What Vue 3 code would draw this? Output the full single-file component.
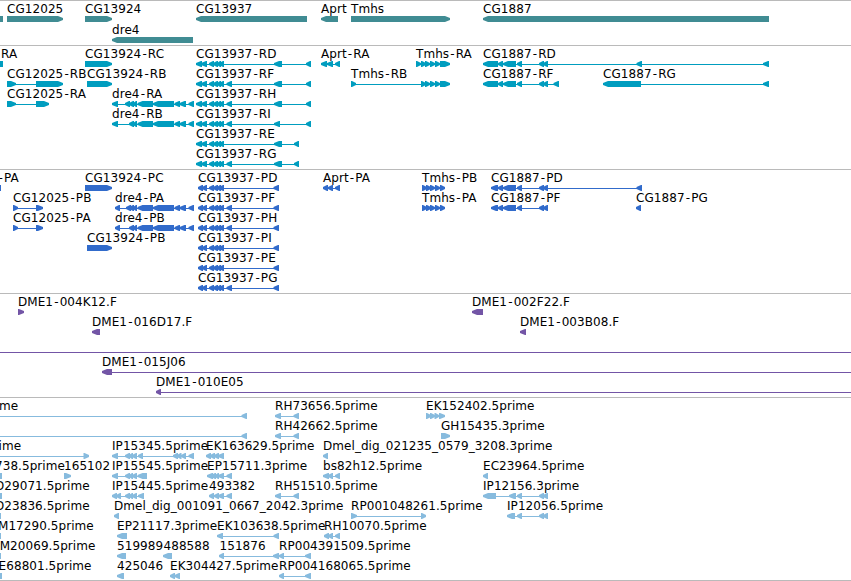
<script setup>
const HEAD = 5;

// feature: [row, label, start, exons, options]
const f = (row, label, x, exons, opts = {}) => ({ row, label, x, exons, ...opts });
const right = { dir: 1 };

const tail37 = [[209, 214], [213, 218], [217, 221], [219, 224]];
const rna37 = [[196, 202], [201, 207], ...tail37];
const pep37 = [[198, 203], [202, 207], ...tail37];
const extra37 = [226.5, 232];
const dre4 = [[129, 134], [133, 137], [137.5, 153], [153, 174], [174.5, 180], [179.5, 186], [188.5, 194]];
const tmhs = [[421, 426], [425, 430], [430, 435], [435, 440]];
const tmhsPep = [[422, 427], [426, 431], [430, 435], [435, 440], [440, 445]];
const cg1887 = [[498, 503], [503, 516], [517, 522], [539, 544], [543, 548]];
const ip = [[125, 130], [129, 133], [132, 137]];
const aprt = [[328, 333], [335, 340]];

const tracks = [
  {
    name: 'gene',
    height: 44,
    pitch: 21,
    features: [
      f(0, '', -8, [[-8, 3]]),
      f(0, 'CG12025', 7, [[7, 63]], right),
      f(0, 'CG13924', 85, [[85, 112]], right),
      f(0, 'CG13937', 196, [[196, 307]]),
      f(0, 'Aprt', 321, [[321, 338]]),
      f(0, 'Tmhs', 351, [[351, 450]], right),
      f(0, 'CG1887', 483, [[483, 769]]),
      f(1, 'dre4', 112, [[112, 193]]),
    ],
  },
  {
    name: 'transcript',
    height: 123,
    pitch: 20,
    features: [
      f(0, 'RA', 1, [[-8, 3]]),
      f(0, 'CG13924-RC', 85, [[85, 112]], right),
      f(0, 'CG13937-RD', 196, [...rna37, [274, 282], [306, 311]]),
      f(0, 'Aprt-RA', 321, [[321, 327], [327, 333], [335, 340]]),
      f(0, 'Tmhs-RA', 416, [[416, 421], ...tmhs, [440, 450]], right),
      f(0, 'CG1887-RD', 483, [[483, 498], ...cg1887, [636.5, 642], [763, 769]]),
      f(1, 'CG12025-RB', 7, [[7, 16], [36, 63]], right),
      f(1, 'CG13924-RB', 87, [[87, 112]], right),
      f(1, 'CG13937-RF', 196, [...rna37, extra37, [274, 282], [306, 311]]),
      f(1, 'Tmhs-RB', 351, [[351, 356], ...tmhs, [440, 450]], right),
      f(1, 'CG1887-RF', 483, [[483, 498], ...cg1887, [553.5, 559]]),
      f(1, 'CG1887-RG', 603, [[603, 641], [763, 769]]),
      f(2, 'CG12025-RA', 7, [[7, 16], [36, 49]], right),
      f(2, 'dre4-RA', 112, [[112, 118], [125, 130], ...dre4]),
      f(2, 'CG13937-RH', 196, [...rna37, extra37, [274, 282], [306, 311]]),
      f(3, 'dre4-RB', 112, [[112, 118], ...dre4]),
      f(3, 'CG13937-RI', 196, [...rna37, extra37, [274, 280], [306, 311]]),
      f(4, 'CG13937-RE', 196, [...rna37, [274, 282], [294, 299]]),
      f(5, 'CG13937-RG', 196, [...rna37, extra37, [274, 282], [294, 299]]),
    ],
  },
  {
    name: 'protein',
    height: 123,
    pitch: 20,
    features: [
      f(0, '-PA', -2.6, [[-8, 1]]),
      f(0, 'CG13924-PC', 85, [[85, 112]], right),
      f(0, 'CG13937-PD', 198, [...pep37, [273.5, 279]]),
      f(0, 'Aprt-PA', 323, [[323, 328], ...aprt]),
      f(0, 'Tmhs-PB', 422, tmhsPep, right),
      f(0, 'CG1887-PD', 491, [[491, 498], ...cg1887, [636.5, 642]]),
      f(1, 'CG12025-PB', 13, [[13, 18], [36, 43]], right),
      f(1, 'dre4-PA', 115, [[115, 120], [126, 131], ...dre4]),
      f(1, 'CG13937-PF', 198, [...pep37, extra37, [273.5, 279]]),
      f(1, 'Tmhs-PA', 422, tmhsPep, right),
      f(1, 'CG1887-PF', 491, [[491, 498], ...cg1887]),
      f(1, 'CG1887-PG', 636, [[636, 641]]),
      f(2, 'CG12025-PA', 13, [[13, 18], [36, 43]], right),
      f(2, 'dre4-PB', 115, [[115, 120], ...dre4]),
      f(2, 'CG13937-PH', 198, [...pep37, extra37, [273.5, 279]]),
      f(3, 'CG13924-PB', 87, [[87, 112]], right),
      f(3, 'CG13937-PI', 198, [...pep37, [273.5, 279]]),
      f(4, 'CG13937-PE', 198, [...pep37, [273.5, 279]]),
      f(5, 'CG13937-PG', 198, [...pep37, extra37, [273.5, 279]]),
    ],
  },
  {
    name: 'bac',
    height: 103,
    pitch: 20,
    features: [
      f(0, 'DME1-004K12.F', 18, [[18, 24]], right),
      f(0, 'DME1-002F22.F', 472, [[472, 483]]),
      f(1, 'DME1-016D17.F', 92, [[92, 100]]),
      f(1, 'DME1-003B08.F', 520, [[520, 526]]),
      f(2, '', 0, [], { from: 0, to: 851 }),
      f(3, 'DME1-015J06', 102, [[102, 112]], { to: 851 }),
      f(4, 'DME1-010E05', 156, [[156, 161]], { to: 851 }),
    ],
  },
  {
    name: 'est',
    height: 182,
    pitch: 20,
    features: [
      f(0, 'me', -1, [[241.5, 247]], { from: 0 }),
      f(0, 'RH73656.5prime', 275, [[275, 281], [293.5, 299]]),
      f(0, 'EK152402.5prime', 426, [[426, 431], [430, 435], [434.5, 439], [439, 445]], right),
      f(1, '', 0, [[241.5, 247]], { from: 0 }),
      f(1, 'RH42662.5prime', 275, [[275, 281], [293.5, 299]]),
      f(1, 'GH15435.3prime', 441, [[441, 450]], right),
      f(2, 'ime', -1.5, [[83.5, 89]], { from: 0, dir: 1 }),
      f(2, 'IP15345.5prime', 112, [[112, 118], ...ip, [138, 143], [173, 178], [177, 181.5], [181, 186], [188.5, 194]]),
      f(2, 'EK163629.5prime', 206, [[206, 211], [210, 215], [214, 219], [218, 224]]),
      f(2, 'Dmel_dig_021235_0579_3208.3prime', 323, [[323, 328]]),
      f(3, '738.5prime', -5, [[-8, 2]]),
      f(3, '165102', 64, [[64, 71]], right),
      f(3, 'IP15545.5prime', 112, [[112, 118], ...ip, [137.5, 147]]),
      f(3, 'EP15711.3prime', 207, [[207, 213], [211, 216], [215, 219], [218, 224], extra37]),
      f(3, 'bs82h12.5prime', 323, [[323, 329], ...aprt]),
      f(3, 'EC23964.5prime', 483, [[483, 488]]),
      f(4, 'D29071.5prime', -5, [[-8, 2]]),
      f(4, 'IP15445.5prime', 112, [[112, 117], [116, 121], ...ip, [138, 144]]),
      f(4, '493382', 209, [[209, 214], [214, 219], [218, 224], extra37]),
      f(4, 'RH51510.5prime', 275, [[275, 281], [293.5, 299]]),
      f(4, 'IP12156.3prime', 483, [[483, 496], [509, 516], [517, 522], [539, 544], [543, 548]]),
      f(5, 'D23836.5prime', -5, [[-8, 1]]),
      f(5, 'Dmel_dig_001091_0667_2042.3prime', 114, [[114, 119]]),
      f(5, 'RP001048261.5prime', 351, [[351, 357], [421, 426]], right),
      f(5, 'IP12056.5prime', 507, [[507, 515], [517, 522], [539, 544], [543, 548]]),
      f(6, 'M17290.5prime', -2, [[-8, 1]]),
      f(6, 'EP21117.3prime', 117, [[117, 127]]),
      f(6, 'EK103638.5prime', 217, [[217, 223], [273.5, 279]]),
      f(6, 'RH10070.5prime', 324, [[324, 329], ...aprt]),
      f(7, 'M20069.5prime', -0.3, [[-8, 1]]),
      f(7, '519989', 117, [[117, 126]]),
      f(7, '488588', 163.5, [[163, 172]]),
      f(7, '151876', 219.5, [[219, 224], [273, 279]]),
      f(7, 'RP004391509.5prime', 279, [[279, 284], [305, 311]]),
      f(8, 'E68801.5prime', -1.4, [[-8, 2]]),
      f(8, '425046', 117, [[117, 124]]),
      f(8, 'EK304427.5prime', 170, [[170, 175], [174.5, 180]]),
      f(8, 'RP004168065.5prime', 279, [[279, 284], [305, 311]]),
    ],
  },
];

// block with an arrow head on its leading side
function exonPoints([a, b], dir) {
  const head = Math.min(HEAD, b - a - 1);
  return dir === 1
    ? `${a},0 ${b - head},0 ${b},2 ${b},4 ${b - head},6 ${a},6`
    : `${b},0 ${a + head},0 ${a},2 ${a},4 ${a + head},6 ${b},6`;
}

function span({ exons, from, to }) {
  const start = from ?? exons[0][0];
  const end = to ?? exons[exons.length - 1][1];
  return { x: start, width: end - start };
}

const parts = (label) => label.split(/(-)/).filter(Boolean);
</script>

<template>
  <div class="browser">
    <section v-for="track in tracks" :key="track.name" class="track" :class="track.name">
      <svg class="canvas" width="851" :height="track.height">
        <g
          v-for="(item, i) in track.features"
          :key="i"
          :transform="`translate(0 ${item.row * track.pitch})`"
        >
          <g class="glyph" transform="translate(0 15)">
            <rect v-bind="span(item)" y="3" height="1" shape-rendering="crispEdges" />
            <polygon v-for="(exon, j) in item.exons" :key="j" :points="exonPoints(exon, item.dir)" />
          </g>
          <text v-if="item.label" class="label" :x="item.x" y="12"><tspan v-for="(part, k) in parts(item.label)" :key="k" :dx="k > 0 || part === '-' ? 1.1 : 0">{{ part }}</tspan></text>
        </g>
      </svg>
    </section>
  </div>
</template>

<style scoped>
.browser {
  width: 851px;
  height: 581px;
  box-sizing: border-box;
  overflow: hidden;
  background: #fff;
  border-bottom: 1px solid #bababa;
}
.track {
  border-top: 1px solid #bababa;
}
.canvas {
  display: block;
}
.label {
  font-family: 'DejaVu Sans', sans-serif;
  font-size: 12px;
  letter-spacing: 0.06px;
  fill: #000;
}
.gene .glyph {
  fill: #408c93;
}
.transcript .glyph {
  fill: #009dbf;
}
.protein .glyph {
  fill: #316bcb;
}
.bac .glyph {
  fill: #7355a6;
}
.est .glyph {
  fill: #87bbde;
}
</style>
